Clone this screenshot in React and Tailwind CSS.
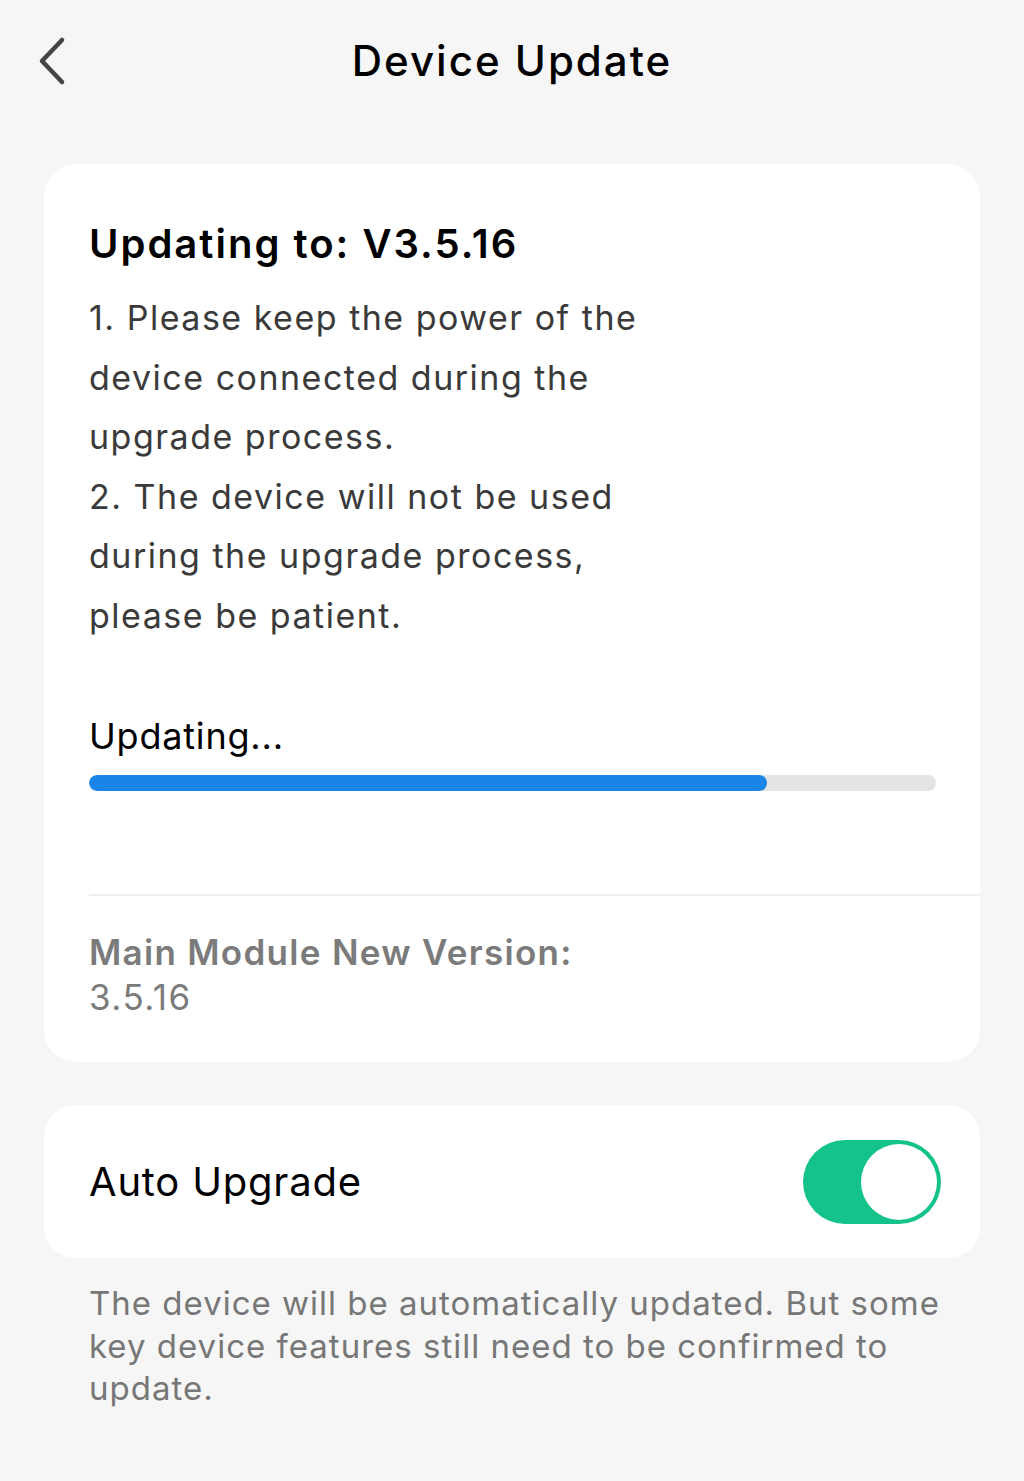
import React from 'react';

const ChevronLeft = () => (
  <svg width="30" height="50" viewBox="0 0 30 50" fill="none" stroke="#444" strokeWidth="4.5" strokeLinecap="round" strokeLinejoin="round">
    <path d="M25 4 L5 25 L25 46" />
  </svg>
);

const App = () => {
  const progress = 80;

  return (
    <div className="min-h-[1481px] w-full bg-[#f6f6f6] text-black" style={{ fontFamily: 'Inter, "Noto Sans", sans-serif' }}>
      <div className="relative flex h-[120px] items-center justify-center">
        <div className="absolute left-[37px] top-[36px]">
          <ChevronLeft />
        </div>
        <h1 className="text-[42px] font-medium tracking-[2px]">Device Update</h1>
      </div>

      <div className="px-[44px] pt-[44px]">
        <div className="rounded-[32px] bg-white pb-[44px] pl-[45px] pt-[56px]">
          <div className="pr-[44px]">
            <h2 className="text-[40px] font-semibold leading-[48px] tracking-[2px]">Updating to: V3.5.16</h2>
            <p className="mt-[20px] text-[34px] leading-[59.5px] tracking-[1.5px] text-[#3a3a3a]">
              1. Please keep the power of the
              <br />
              device connected during the
              <br />
              upgrade process.
              <br />
              2. The device will not be used
              <br />
              during the upgrade process,
              <br />
              please be patient.
            </p>
            <div className="mt-[67px] text-[36px] leading-[48px] tracking-[0.8px]">Updating...</div>
            <div className="mt-[15px] h-[16px] w-full overflow-hidden rounded-full bg-[#e4e4e4]">
              <div className="h-full rounded-full bg-[#1b84e8]" style={{ width: `${progress}%` }} />
            </div>
          </div>
          <div className="mt-[103px] h-[2px] bg-[#efefef]" />
          <div className="pt-[32px]">
            <div className="text-[35px] font-semibold leading-[48px] tracking-[1.3px] text-[#7b7b7b]">Main Module New Version:</div>
            <div className="text-[35px] leading-[42px] tracking-[1.5px] text-[#7b7b7b]">3.5.16</div>
          </div>
        </div>

        <div className="mt-[43px] flex h-[153px] items-center justify-between rounded-[32px] bg-white pl-[45px] pr-[39px]">
          <span className="text-[40px] tracking-[0.8px]">Auto Upgrade</span>
          <div className="flex h-[84px] w-[138px] items-center justify-end rounded-full bg-[#14c28b] p-[4px]">
            <div className="h-[76px] w-[76px] rounded-full bg-white" />
          </div>
        </div>

        <p className="mt-[24px] pl-[45px] text-[33px] leading-[42.5px] tracking-[1px] text-[#777]">
          The device will be automatically updated. But some
          <br />
          key device features still need to be confirmed to
          <br />
          update.
        </p>
      </div>
    </div>
  );
};

export default App;
